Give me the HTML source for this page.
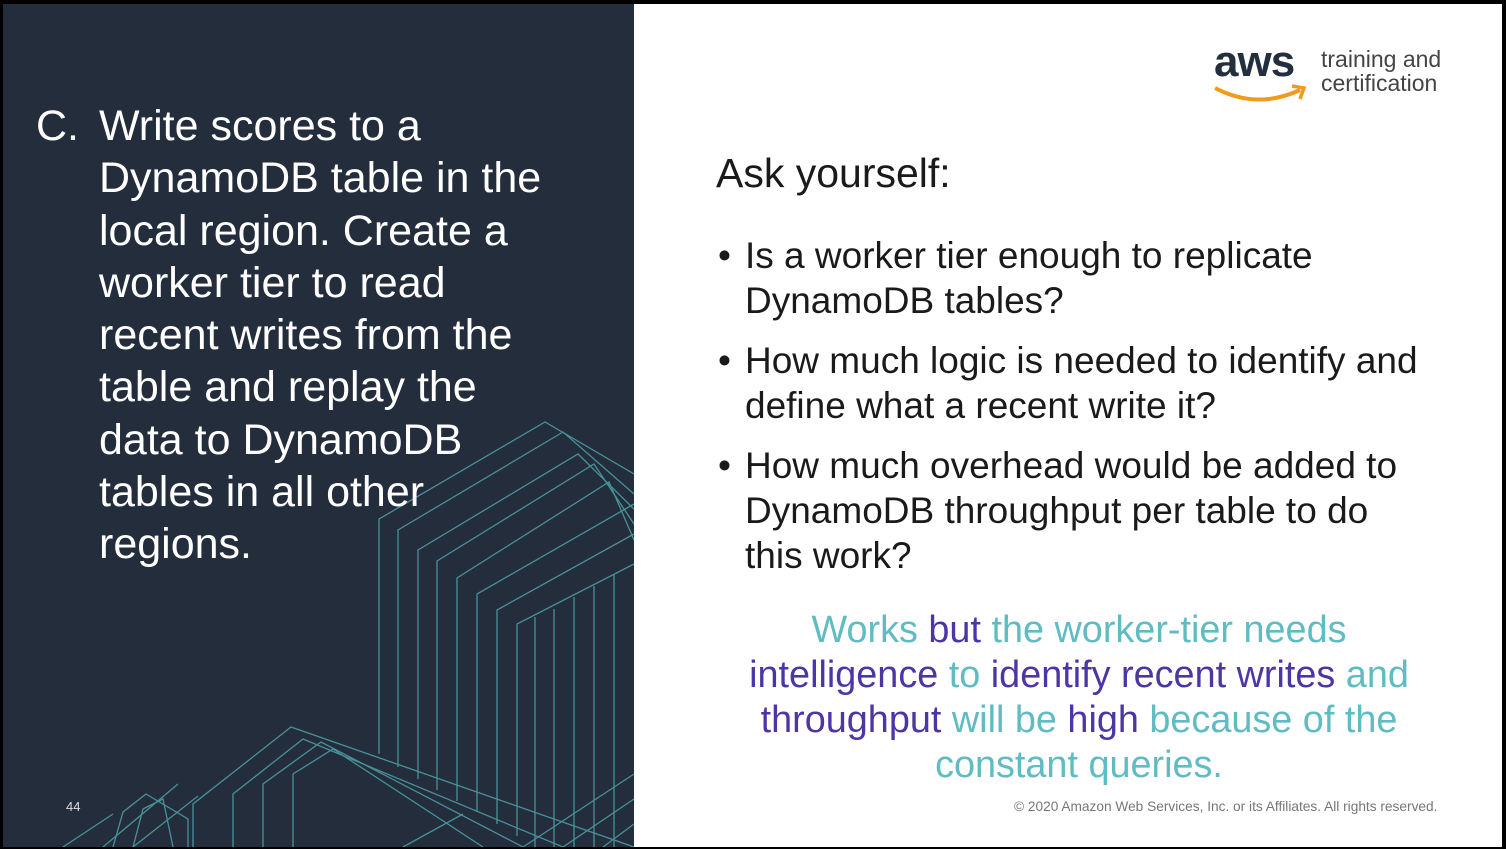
<!DOCTYPE html>
<html><head><meta charset="utf-8"><style>
html,body{margin:0;padding:0;background:#000;}
body{width:1506px;height:849px;position:relative;overflow:hidden;font-family:"Liberation Sans",sans-serif;}
#left{position:absolute;left:3px;top:4px;width:631px;height:843px;background:#232d3c;overflow:hidden;}
#right{position:absolute;left:634px;top:4px;width:868px;height:843px;background:#fff;}
.lt{position:absolute;color:#fff;font-size:43px;line-height:52.3px;}
.rt{position:absolute;color:#1a1a1a;}
.bul{position:absolute;left:111px;font-size:37px;line-height:45px;color:#1a1a1a;white-space:nowrap;}
.bul:before{content:"•";position:absolute;left:-27px;}
.t{color:#5fbcc2}.p{color:#4e35a5}
</style></head><body>
<div id="left">
<svg width="631" height="843" style="position:absolute;left:0;top:0" fill="none" stroke="#4fa3a8" stroke-width="1.3" opacity="0.85">
<g>
<polyline points="376,750 376,515 542,418 631,470"/>
<polyline points="395,763 395,526 560,428 631,490"/>
<polyline points="415,775 415,546 575,450 631,505"/>
<polyline points="434,786 434,557 591,460 631,520"/>
<polyline points="454,797 454,574 606,478 631,536"/>
<polyline points="474,808 474,590 631,500"/>
<polyline points="494,820 494,606 631,530"/>
<polyline points="514,832 514,620 631,560"/>
<line x1="532" y1="613" x2="532" y2="843"/><line x1="551" y1="605" x2="551" y2="843"/><line x1="571" y1="593" x2="571" y2="843"/><line x1="591" y1="582" x2="591" y2="843"/><line x1="611" y1="570" x2="611" y2="843"/>
<polyline points="190,843 190,800 288,723 631,843"/>
<polyline points="230,843 230,790 300,735 560,843"/>
<polyline points="260,843 260,780 318,738 520,843"/>
<polyline points="290,843 290,770 330,745 480,843"/>
<polyline points="110,843 120,808 143,790 185,815 185,843"/>
<polyline points="130,843 140,805 160,795 170,843"/>
<line x1="100" y1="843" x2="175" y2="780"/>
<line x1="130" y1="843" x2="195" y2="792"/>
<line x1="60" y1="843" x2="110" y2="810"/>
<line x1="520" y1="843" x2="631" y2="770"/>
<line x1="560" y1="843" x2="631" y2="795"/>
<line x1="600" y1="843" x2="631" y2="820"/>
<line x1="400" y1="843" x2="460" y2="810"/>
</g>
</svg>
<div class="lt" style="left:33px;top:96px">C.</div>
<div class="lt" style="left:96px;top:96px">Write scores to a<br>DynamoDB table in the<br>local region. Create a<br>worker tier to read<br>recent writes from the<br>table and replay the<br>data to DynamoDB<br>tables in all other<br>regions.</div>
<div style="position:absolute;left:63px;top:795px;color:#ddd;font-size:13px">44</div>
</div>
<div id="right">
<div style="position:absolute;left:580px;top:36px;font-size:44px;font-weight:bold;color:#232f3e;letter-spacing:-1px;line-height:44px">aws</div>
<svg style="position:absolute;left:578px;top:78px" width="96" height="24"><path d="M3 6 Q45 28 88 8" stroke="#f29a1e" stroke-width="4" fill="none"/><path d="M80 4 L92 6 L88 17" stroke="#f29a1e" stroke-width="3.5" fill="none"/></svg>
<div style="position:absolute;left:687px;top:43px;font-size:23px;line-height:24px;color:#444">training and<br>certification</div>
<div class="rt" style="left:82px;top:146px;font-size:41px">Ask yourself:</div>
<div class="bul" style="top:229px">Is a worker tier enough to replicate<br>DynamoDB tables?</div>
<div class="bul" style="top:334px">How much logic is needed to identify and<br>define what a recent write it?</div>
<div class="bul" style="top:439px">How much overhead would be added to<br>DynamoDB throughput per table to do<br>this work?</div>
<div style="position:absolute;left:40px;width:810px;top:604px;text-align:center;font-size:37.8px;line-height:45px;white-space:nowrap">
<span class="t">Works </span><span class="p">but</span><span class="t"> the worker-tier needs</span><br><span class="p">intelligence</span><span class="t"> to </span><span class="p">identify recent writes</span><span class="t"> and</span><br><span class="p">throughput</span><span class="t"> will be </span><span class="p">high</span><span class="t"> because of the</span><br><span class="t">constant queries.</span></div>
<div style="position:absolute;left:380px;top:795px;font-size:13.7px;color:#777">© 2020 Amazon Web Services, Inc. or its Affiliates. All rights reserved.</div>
</div>
</body></html>
